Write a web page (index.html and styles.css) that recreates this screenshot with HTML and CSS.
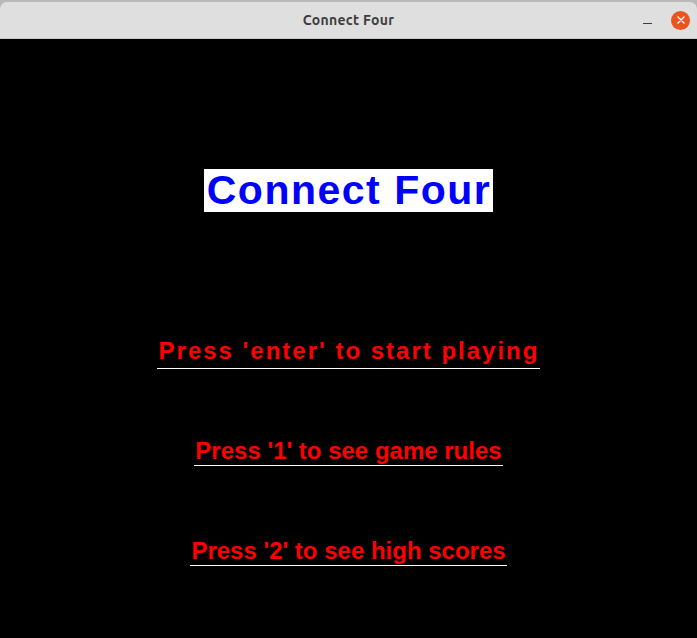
FILE: index.html
```html
<!DOCTYPE html>
<html>
<head>
<meta charset="utf-8">
<link rel="stylesheet" href="styles.css">
</head>
<body>
<div class="frame">
  <div class="titlebar">
    <span class="wintitle">Connect Four</span>
    <div class="controls">
      <span class="minimize"></span>
      <span class="close">
        <svg width="10" height="10" viewBox="0 0 10 10"><path d="M2 2 L8 8 M8 2 L2 8" stroke="#fff" stroke-width="1.4" stroke-linecap="round"/></svg>
      </span>
    </div>
  </div>
  <main class="canvas">
    <h1 class="heading">Connect Four</h1>
    <div class="menu">
      <div class="option option-wide">Press 'enter' to start playing</div>
      <div class="option option-rules">Press '1' to see game rules</div>
      <div class="option option-scores">Press '2' to see high scores</div>
    </div>
  </main>
</div>
</body>
</html>
```
FILE: styles.css
```css
html, body {
  margin: 0;
  padding: 0;
  width: 697px;
  height: 638px;
  overflow: hidden;
  background: #b9b9b9;
}
.frame {
  display: flex;
  flex-direction: column;
  height: 638px;
  padding-top: 2px;
  box-sizing: border-box;
}
.titlebar {
  height: 36px;
  flex: none;
  background: #dfdfdf;
  border-radius: 7px 7px 0 0;
  border-bottom: 1px solid #c9c9c9;
  display: flex;
  align-items: center;
  justify-content: center;
  position: relative;
}
.wintitle {
  font-family: "Ubuntu", "DejaVu Sans", sans-serif;
  font-weight: bold;
  font-size: 14px;
  letter-spacing: 0.3px;
  color: #3d3d3d;
}
.controls {
  position: absolute;
  right: 7px;
  top: 0;
  height: 36px;
  display: flex;
  align-items: center;
  gap: 19px;
}
.minimize {
  width: 9px;
  height: 1px;
  background: #3c3c3c;
  margin-top: 6px;
}
.close {
  width: 19px;
  height: 19px;
  border-radius: 50%;
  background: #e95420;
  display: flex;
  align-items: center;
  justify-content: center;
}
.canvas {
  flex: 1;
  background: #000;
  display: flex;
  flex-direction: column;
  align-items: center;
  font-family: "Liberation Sans", Arial, sans-serif;
  font-weight: bold;
}
.heading {
  margin: 130px 0 0 0;
  background: #fff;
  color: #0000ff;
  font-size: 41px;
  font-weight: bold;
  line-height: 43px;
  padding: 0 2px 0 3px;
  letter-spacing: 1.5px;
}
.menu {
  display: flex;
  flex-direction: column;
  align-items: center;
  margin-top: 124px;
}
.option {
  color: #ff0000;
  font-size: 24px;
  line-height: 30px;
  border-bottom: 1px solid #fff;
  padding: 0 1px 2px 1px;
}
.option-wide {
  letter-spacing: 2px;
  padding-left: 2px;
}
.option-rules,
.option-scores {
  line-height: 28px;
  padding-bottom: 0;
}
.option-rules {
  margin-top: 68px;
}
.option-scores {
  margin-top: 71px;
}
```
